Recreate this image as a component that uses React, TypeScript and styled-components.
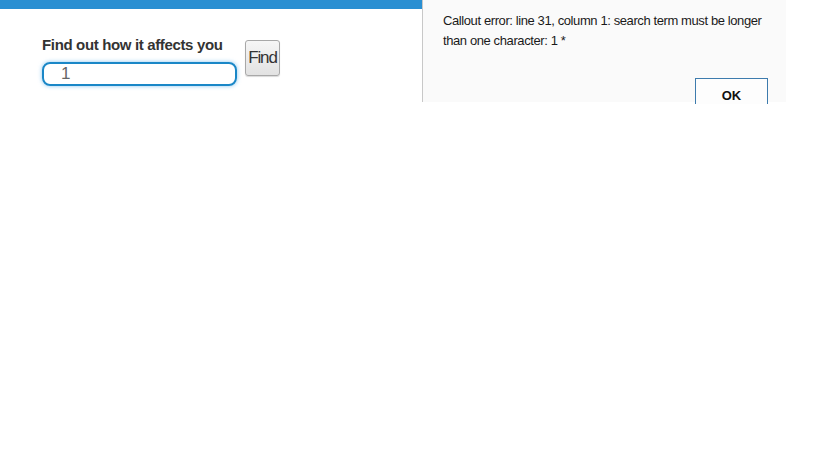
import React from "react";
import styled, { createGlobalStyle } from "styled-components";

const Global = createGlobalStyle`
  html, body { margin: 0; padding: 0; background: #ffffff; }
  body { width: 816px; height: 460px; overflow: hidden; font-family: "Liberation Sans", Arial, sans-serif; }
`;

const Page = styled.div`
  display: flex;
  align-items: flex-start;
  width: 816px;
`;

const Main = styled.div`
  width: 422px;
  display: flex;
  flex-direction: column;
`;

const TopBar = styled.div`
  height: 9px;
  background: #2a8fd2;
`;

const Form = styled.div`
  display: flex;
  align-items: flex-start;
  gap: 8px;
  padding: 27px 0 0 42px;
`;

const Field = styled.div`
  display: flex;
  flex-direction: column;
  gap: 9px;
`;

const Label = styled.label`
  font-size: 15px;
  font-weight: bold;
  color: #333;
  letter-spacing: -0.35px;
  line-height: 17px;
`;

const Input = styled.div`
  box-sizing: border-box;
  width: 195px;
  height: 24px;
  border: 2px solid #1a87c7;
  border-radius: 8px;
  box-shadow: 0 0 4px rgba(60, 160, 230, 0.6);
  font-size: 17px;
  color: #666;
  padding-left: 17px;
  line-height: 20px;
`;

const FindButton = styled.button`
  box-sizing: border-box;
  margin-top: 4px;
  width: 35px;
  height: 36px;
  padding: 0;
  border: 1px solid #a8a8a8;
  border-radius: 3px;
  background: linear-gradient(#f6f6f6, #e2e2e2);
  box-shadow: 0 1px 1px rgba(0,0,0,0.15);
  font-family: "Liberation Sans", Arial, sans-serif;
  font-size: 17px;
  color: #333;
  letter-spacing: -1.2px;
`;

const Dialog = styled.div`
  box-sizing: border-box;
  width: 364px;
  height: 102px;
  background: #fafafa;
  border-left: 1px solid #c8c8c8;
  display: flex;
  flex-direction: column;
  padding: 11px 0 0 20px;
`;

const Message = styled.div`
  font-family: "Liberation Sans", Arial, sans-serif;
  font-size: 13px;
  line-height: 20px;
  color: #1a1a1a;
  letter-spacing: -0.4px;
  width: 328px;
`;

const Buttons = styled.div`
  display: flex;
  justify-content: flex-end;
  padding-right: 18px;
  margin-top: 27px;
`;

const OkButton = styled.button`
  box-sizing: border-box;
  width: 73px;
  height: 26px;
  border: 1px solid #3d7bad;
  border-bottom: none;
  background: #fdfdfd;
  padding: 8px 0 0;
  font-family: "Liberation Sans", Arial, sans-serif;
  font-size: 13px;
  font-weight: bold;
  color: #111;
  line-height: 14px;
  text-align: center;
`;

export default function App() {
  return (
    <>
      <Global />
      <Page>
        <Main>
          <TopBar />
          <Form>
            <Field>
              <Label>Find out how it affects you</Label>
              <Input>1</Input>
            </Field>
            <FindButton>Find</FindButton>
          </Form>
        </Main>
        <Dialog>
          <Message>
            Callout error: line 31, column 1: search term must be longer than one character: 1 *
          </Message>
          <Buttons>
            <OkButton>OK</OkButton>
          </Buttons>
        </Dialog>
      </Page>
    </>
  );
}
